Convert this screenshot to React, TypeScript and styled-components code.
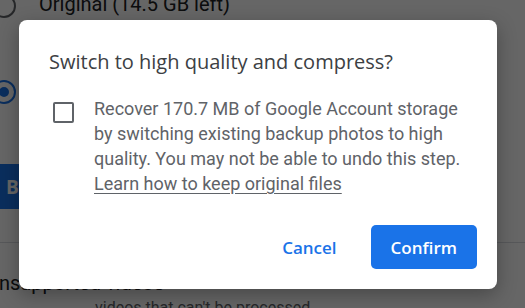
import React from 'react';
import styled, { createGlobalStyle } from 'styled-components';

const GlobalStyle = createGlobalStyle`
  html, body {
    margin: 0;
    padding: 0;
    width: 525px;
    height: 308px;
    overflow: hidden;
    background: #ffffff;
    font-family: Roboto, "Liberation Sans", Arial, sans-serif;
  }
`;

const Page = styled.div`
  width: 525px;
  height: 308px;
  overflow: hidden;
  position: relative;
`;

const Settings = styled.div`
  margin-left: -8px;
  margin-top: -9px;
`;

const OptionRow = styled.div<{ $gap?: number }>`
  display: flex;
  align-items: flex-start;
  gap: 23px;
  margin-bottom: ${(p) => p.$gap ?? 0}px;
`;

const Radio = styled.div<{ $checked?: boolean }>`
  width: 20px;
  height: 20px;
  border-radius: 50%;
  border: 2px solid ${(p) => (p.$checked ? '#1a73e8' : '#5f6368')};
  flex-shrink: 0;
  display: flex;
  align-items: center;
  justify-content: center;
  margin-top: 3px;

  &::after {
    content: '';
    display: ${(p) => (p.$checked ? 'block' : 'none')};
    width: 10px;
    height: 10px;
    border-radius: 50%;
    background: #1a73e8;
  }
`;

const OptionText = styled.div`
  display: flex;
  flex-direction: column;
`;

const OptionTitle = styled.div`
  font-size: 20px;
  line-height: 26px;
  color: #202124;
`;

const OptionSub = styled.div`
  font-size: 16px;
  line-height: 24px;
  color: #5f6368;
`;

const BackupButton = styled.button`
  margin: 37px 0 0 -2px;
  height: 45px;
  padding: 0 16px;
  border: none;
  border-radius: 4px;
  background: #1a73e8;
  color: #fff;
  font-family: "Open Sans", Roboto, sans-serif;
  font-weight: 700;
  font-size: 19px;
`;

const Divider = styled.hr`
  margin: 33px 0 0;
  border: none;
  border-top: 1px solid #dadce0;
`;

const SectionTitle = styled.div`
  margin: 27px 0 0 -6px;
  font-size: 20px;
  line-height: 26px;
  color: #202124;
`;

const SectionSub = styled.div`
  margin: 2px 0 0 103px;
  font-size: 16px;
  color: #5f6368;
`;

const Scrim = styled.div`
  position: absolute;
  inset: 0;
  background: rgba(0, 0, 0, 0.6);
  display: flex;
  align-items: flex-start;
  padding: 20px 0 0 19px;
  box-sizing: border-box;
`;

const Dialog = styled.div`
  width: 478px;
  height: 269px;
  box-sizing: border-box;
  background: #fff;
  border-radius: 8px;
  box-shadow: 0 6px 20px rgba(0, 0, 0, 0.3);
  padding: 30px 20px 20px 30px;
  display: flex;
  flex-direction: column;
`;

const Title = styled.h2`
  margin: 0;
  font-family: "Open Sans", Roboto, sans-serif;
  font-weight: 500;
  font-size: 20px;
  line-height: 24px;
  color: #3c4043;
`;

const Body = styled.div`
  display: flex;
  gap: 20px;
  margin-top: 22px;
  padding-left: 4px;
`;

const Checkbox = styled.div`
  width: 21px;
  height: 21px;
  box-sizing: border-box;
  border: 2px solid #5f6368;
  border-radius: 2px;
  flex-shrink: 0;
  margin-top: 6px;
`;

const Message = styled.p`
  margin: 0;
  font-size: 18px;
  line-height: 25px;
  color: #5f6368;
  width: 372px;
`;

const Link = styled.a`
  color: #5f6368;
  text-decoration: underline;
  text-underline-offset: 3px;
`;

const Actions = styled.div`
  margin-top: auto;
  display: flex;
  justify-content: flex-end;
  align-items: center;
  gap: 14px;
`;

const Button = styled.button<{ $primary?: boolean }>`
  height: 44px;
  padding: 0 20px;
  border: none;
  border-radius: 5px;
  font-family: "Open Sans", Roboto, sans-serif;
  font-weight: 600;
  font-size: 17px;
  cursor: pointer;
  background: ${(p) => (p.$primary ? '#1a73e8' : 'transparent')};
  color: ${(p) => (p.$primary ? '#ffffff' : '#1a73e8')};
`;

const App: React.FC = () => {
  return (
    <>
      <GlobalStyle />
      <Page>
        <Settings>
          <OptionRow $gap={36}>
            <Radio />
            <OptionText>
              <OptionTitle>Original (14.5 GB left)</OptionTitle>
              <OptionSub>Full resolution that counts toward storage</OptionSub>
            </OptionText>
          </OptionRow>
          <OptionRow>
            <Radio $checked />
            <OptionText>
              <OptionTitle>High quality (free unlimited storage)</OptionTitle>
              <OptionSub>Great visual quality at reduced file size</OptionSub>
            </OptionText>
          </OptionRow>
          <BackupButton>Back up</BackupButton>
          <Divider />
          <SectionTitle>Unsupported videos</SectionTitle>
          <SectionSub>videos that can't be processed</SectionSub>
        </Settings>
        <Scrim>
          <Dialog role="dialog">
            <Title>Switch to high quality and compress?</Title>
            <Body>
              <Checkbox />
              <Message>
                Recover 170.7 MB of Google Account storage by switching existing backup photos to high
                quality. You may not be able to undo this step.{' '}
                <Link href="#">Learn how to keep original files</Link>
              </Message>
            </Body>
            <Actions>
              <Button>Cancel</Button>
              <Button $primary>Confirm</Button>
            </Actions>
          </Dialog>
        </Scrim>
      </Page>
    </>
  );
};

export default App;
